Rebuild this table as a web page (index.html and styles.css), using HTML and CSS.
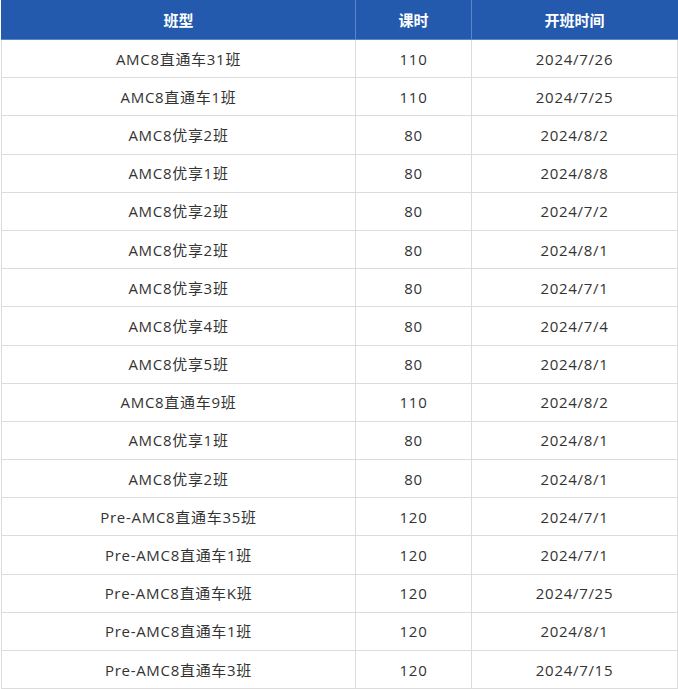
FILE: index.html
```html
<!DOCTYPE html>
<html lang="zh-CN">
<head>
<meta charset="utf-8">
<title>班型</title>
<link rel="stylesheet" href="styles.css">
</head>
<body>
<table class="schedule">
  <colgroup>
    <col class="c1"><col class="c2"><col class="c3">
  </colgroup>
  <thead>
    <tr><th>班型</th><th>课时</th><th>开班时间</th></tr>
  </thead>
  <tbody>
    <tr><td>AMC8直通车31班</td><td>110</td><td>2024/7/26</td></tr>
    <tr><td>AMC8直通车1班</td><td>110</td><td>2024/7/25</td></tr>
    <tr><td>AMC8优享2班</td><td>80</td><td>2024/8/2</td></tr>
    <tr><td>AMC8优享1班</td><td>80</td><td>2024/8/8</td></tr>
    <tr><td>AMC8优享2班</td><td>80</td><td>2024/7/2</td></tr>
    <tr><td>AMC8优享2班</td><td>80</td><td>2024/8/1</td></tr>
    <tr><td>AMC8优享3班</td><td>80</td><td>2024/7/1</td></tr>
    <tr><td>AMC8优享4班</td><td>80</td><td>2024/7/4</td></tr>
    <tr><td>AMC8优享5班</td><td>80</td><td>2024/8/1</td></tr>
    <tr><td>AMC8直通车9班</td><td>110</td><td>2024/8/2</td></tr>
    <tr><td>AMC8优享1班</td><td>80</td><td>2024/8/1</td></tr>
    <tr><td>AMC8优享2班</td><td>80</td><td>2024/8/1</td></tr>
    <tr><td>Pre-AMC8直通车35班</td><td>120</td><td>2024/7/1</td></tr>
    <tr><td>Pre-AMC8直通车1班</td><td>120</td><td>2024/7/1</td></tr>
    <tr><td>Pre-AMC8直通车K班</td><td>120</td><td>2024/7/25</td></tr>
    <tr><td>Pre-AMC8直通车1班</td><td>120</td><td>2024/8/1</td></tr>
    <tr><td>Pre-AMC8直通车3班</td><td>120</td><td>2024/7/15</td></tr>
  </tbody>
</table>
</body>
</html>
```
FILE: styles.css
```css
html, body {
  margin: 0;
  padding: 0;
  background: #ffffff;
}
body {
  padding-left: 1px;
  font-family: "Open Sans", "Noto Sans CJK SC", sans-serif;
}
.schedule {
  width: 676px;
  border-collapse: collapse;
  table-layout: fixed;
  font-size: 15px;
  color: #333333;
}
.c1 { width: 354px; }
.c2 { width: 116px; }
.c3 { width: 206px; }
.schedule th {
  height: 39px;
  background: #245aad;
  color: #ffffff;
  font-family: "Noto Sans CJK SC", sans-serif;
  font-weight: 700;
  font-size: 15px;
  text-align: center;
  vertical-align: middle;
  padding: 0;
  border: 1px solid #5a86c8;
  border-top: 0;
}
.schedule th:first-child { border-left-color: #245aad; }
.schedule th:last-child { border-right-color: #245aad; }
.schedule td {
  height: 37.2px;
  padding: 0;
  text-align: center;
  vertical-align: middle;
  border: 1px solid #dcdcdc;
  line-height: 20px;
  letter-spacing: 0.7px;
}
```
